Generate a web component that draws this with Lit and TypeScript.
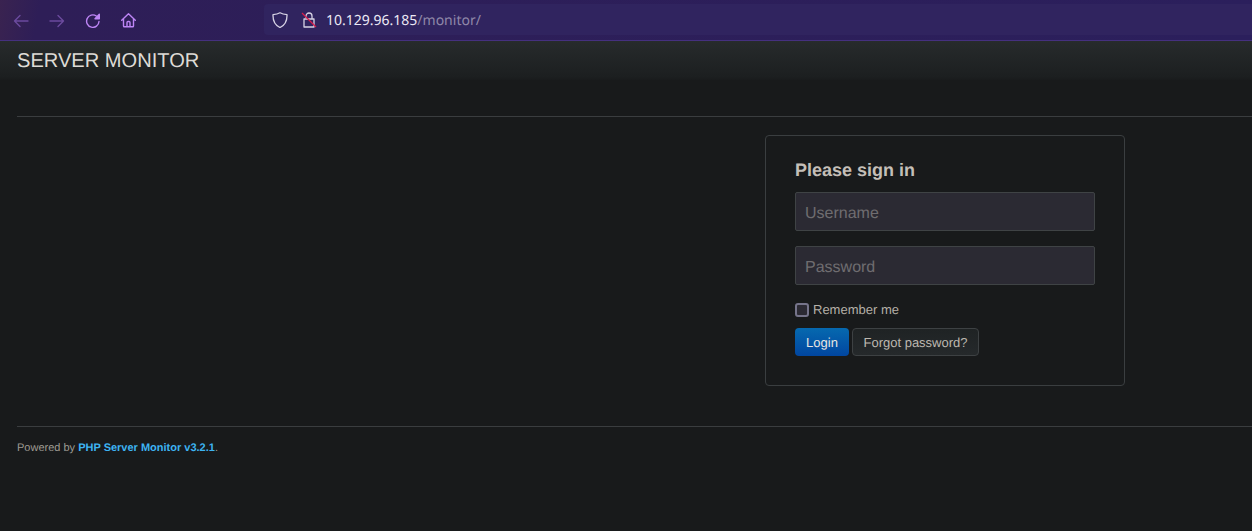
import { LitElement, html, css } from "lit";
import { customElement } from "lit/decorators.js";

@customElement("app-root")
export class AppRoot extends LitElement {
  static styles = css`
    :host { display: block; min-height: 531px; background: #181a1b; font-family: "Liberation Sans", Arial, sans-serif; color: #c8c3bc; overflow: hidden; text-rendering: geometricPrecision; }
    * { box-sizing: border-box; }
    .toolbar { height: 41px; border-bottom: 1px solid #45307f; background: linear-gradient(100deg, #3a2350 0, #2e1e57 40px, #2b1f5c 100%); display: flex; align-items: stretch; }
    .nav { width: 264px; flex: none; display: flex; align-items: center; padding-left: 13px; gap: 20px; }
    .nav svg { width: 16px; height: 16px; flex: none; fill: none; stroke-width: 1.4; stroke-linecap: round; stroke-linejoin: round; }
    .nav svg.dim { stroke: #6b4a9e; }
    .nav svg.on { stroke: #bd85f5; }
    .nav svg.home { margin-left: -1px; }
    .urlbar { flex: 1; margin: 4px 0 5px; background: #30245f; border-radius: 4px 0 0 4px; display: flex; align-items: center; padding-left: 8px; font: 14px/20px "Noto Sans", sans-serif; }
    .urlbar span { padding-top: 2px; }
    .urlbar svg { flex: none; width: 16px; height: 16px; fill: none; stroke: #d6d2e4; stroke-width: 1.3; stroke-linejoin: round; }
    .lock { margin-left: 13px; margin-right: 9px; }
    .host { color: #ece9f5; }
    .path { color: #8f87a8; }
    .navbar { height: 39px; background: linear-gradient(#272b2c, #1c1f20 92%, #191b1c); padding: 1px 0 0 17px; font-size: 20.1px; line-height: 38px; color: #dedbd6; }
    .main { padding-left: 17px; }
    .rule { height: 1px; background: #3a3d3f; }
    .rule.top { margin-top: 36px; }
    .row { display: flex; justify-content: flex-end; padding: 18px 127px 40px 0; }
    .card { width: 360px; height: 251px; border: 1px solid #3a3e40; border-radius: 4px; padding: 19px 29px; }
    h2 { margin: 0 0 7px; font-size: 18px; line-height: 30px; font-weight: bold; color: #c4bfb8; }
    .input { height: 39px; margin-bottom: 15px; background: #2b2a33; border: 1px solid #3f4345; border-radius: 2px; padding: 2px 9px 0; font-size: 16px; line-height: 37px; color: #6f6d70; }
    .remember { display: flex; align-items: center; gap: 4px; font-size: 13px; line-height: 18px; color: #b5b0a8; margin-top: 16px; }
    .box { width: 14px; height: 14px; background: #2b2a33; border: 2px solid #75748a; border-radius: 3px; }
    .btns { display: flex; gap: 3px; margin-top: 9px; }
    .btn { height: 28px; border-radius: 4px; font-size: 13px; line-height: 29px; text-align: center; }
    .login { width: 54px; background: linear-gradient(#0669af, #0146a0); color: #e8e6e3; }
    .forgot { width: 127px; background: linear-gradient(#1f2324, #25292b); border: 1px solid #3d4143; line-height: 27px; color: #bdb8b0; }
    .footer { font-size: 11px; line-height: 14px; padding-top: 14px; color: #9e9a92; }
    .footer b { color: #3db4f2; }
  `;

  render() {
    return html`
      <div class="toolbar">
        <div class="nav">
          <svg class="dim" viewBox="0 0 16 16"><path d="M15 9H1.500M7 3.500L1.500 9 7 14.500"/></svg>
          <svg class="dim" viewBox="0 0 16 16"><path d="M1 9h13.500M9 3.500L14.500 9 9 14.500"/></svg>
          <svg class="on" viewBox="0 0 16 16"><path d="M14 9.500A6.200 6.200 0 1 1 11.300 4"/><path d="M14.300 2.300v4.400H10z" fill="#bd85f5"/></svg>
          <svg class="on home" viewBox="0 0 16 16"><path d="M1.700 8.200L8.500 1.700l6.800 6.500M3.500 6.800V14a.8.8 0 0 0 .8.800h8.400a.8.8 0 0 0 .8-.8V6.800M7 14.600V10.500a1 1 0 0 1 1-1h1a1 1 0 0 1 1 1v4.100"/></svg>
        </div>
        <div class="urlbar">
          <svg viewBox="0 0 16 16"><path d="M8 .8C10 2 12 2.500 15 2.700c.2 6-1.500 10.300-7 12.800C2.500 13 .8 8.700 1 2.700 4 2.500 6 2 8 .8z"/></svg>
          <svg class="lock" viewBox="0 0 16 16"><path d="M5 6V4a3 3 0 0 1 6 0V6.500M3 7h10v8H3z"/><path d="M1 1L15 15" stroke="#d81b4a" stroke-width="1.200"/></svg>
          <span class="host">10.129.96.185</span><span class="path">/monitor/</span>
        </div>
      </div>
      <div class="navbar">SERVER MONITOR</div>
      <div class="main">
        <div class="rule top"></div>
        <div class="row">
          <div class="card">
            <h2>Please sign in</h2>
            <div class="input">Username</div>
            <div class="input">Password</div>
            <div class="remember"><span class="box"></span>Remember me</div>
            <div class="btns"><div class="btn login">Login</div><div class="btn forgot">Forgot password?</div></div>
          </div>
        </div>
        <div class="rule"></div>
        <div class="footer">Powered by <b>PHP Server Monitor v3.2.1</b>.</div>
      </div>
    `;
  }
}
